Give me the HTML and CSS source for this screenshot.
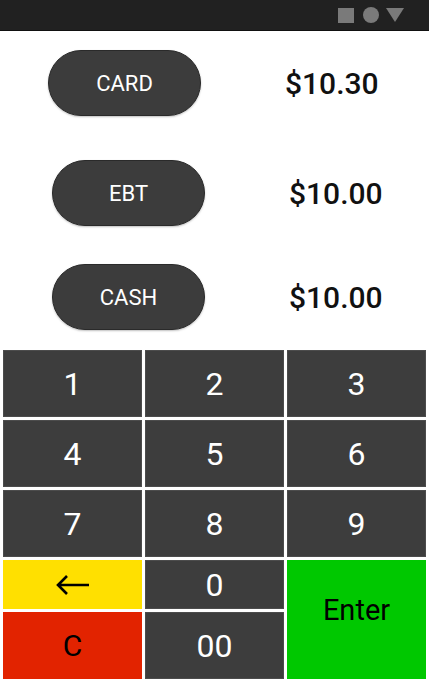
FILE: index.html
```html
<html>

<head>
    <meta charset="UTF-8" />
    <link rel="stylesheet" href="styles.css">
</head>

<body>
    <div class="statusbar">
        <span class="nav-square"></span>
        <span class="nav-circle"></span>
        <svg class="nav-tri" width="20" height="16" viewBox="0 0 20 16">
            <polygon points="1,1 19,1 10,15" fill="#7a7a7a" />
        </svg>
    </div>

    <div class="tenders">
        <div class="tender tender-first">
            <button class="pill">CARD</button>
            <span class="amount">$10.30</span>
        </div>
        <div class="tender tender-ebt">
            <button class="pill">EBT</button>
            <span class="amount">$10.00</span>
        </div>
        <div class="tender tender-cash">
            <button class="pill">CASH</button>
            <span class="amount">$10.00</span>
        </div>
    </div>

    <div class="keypad">
        <button class="key">1</button>
        <button class="key">2</button>
        <button class="key">3</button>
        <button class="key">4</button>
        <button class="key">5</button>
        <button class="key">6</button>
        <button class="key">7</button>
        <button class="key">8</button>
        <button class="key">9</button>
        <button class="key key-back">
            <svg width="36" height="22" viewBox="0 0 36 22">
                <path d="M34 11 H3 M12 2 L3 11 L12 20" fill="none" stroke="#000" stroke-width="2.6" />
            </svg>
        </button>
        <button class="key key-zero">0</button>
        <button class="key key-enter">Enter</button>
        <button class="key key-clear">C</button>
        <button class="key key-dzero">00</button>
    </div>
</body>

</html>
```

FILE: styles.css
```css
body {
    margin: 0;
    width: 429px;
    height: 681px;
    background: #fff;
    font-family: Roboto, 'Noto Sans', sans-serif;
    overflow: hidden;
}

.statusbar {
    height: 31px;
    background: #212121;
    border-bottom: 1px solid #111;
    display: flex;
    align-items: center;
    justify-content: flex-end;
    gap: 9px;
    padding-right: 24px;
    box-sizing: border-box;
}

.nav-square {
    width: 16px;
    height: 15px;
    background: #7a7a7a;
}

.nav-circle {
    width: 16px;
    height: 16px;
    border-radius: 50%;
    background: #7a7a7a;
}

.nav-tri {
    display: block;
    margin-left: -3px;
}

.tenders {
    display: flex;
    flex-direction: column;
    padding-top: 19px;
}

.tender {
    display: flex;
    align-items: center;
    gap: 84px;
    padding-left: 52px;
}

.tender-first {
    padding-left: 48px;
}

.tender-ebt {
    margin-top: 44px;
}

.tender-cash {
    margin-top: 38px;
}

.pill {
    width: 153px;
    height: 66px;
    border-radius: 33px;
    background: #3c3c3c;
    border: 1px solid #2a2a2a;
    box-shadow: 0 1px 2px rgba(0, 0, 0, 0.25);
    color: #fff;
    font-family: Roboto, sans-serif;
    font-size: 22px;
    padding: 0;
}

.amount {
    font-size: 30px;
    font-weight: 500;
    color: #111;
}

.keypad {
    display: grid;
    grid-template-columns: repeat(3, 139px);
    grid-template-rows: 67px 67px 67px 49px 67px;
    gap: 3px;
    padding: 0 3px;
    margin-top: 20px;
}

.key {
    background: #3d3d3d;
    border: 1px solid #4c4c4c;
    color: #fff;
    font-family: Roboto, sans-serif;
    font-size: 32px;
    padding: 0;
    display: flex;
    align-items: center;
    justify-content: center;
}

.key-back {
    background: #ffe000;
    border-color: #ffe000;
}

.key-clear {
    background: #e22300;
    border-color: #e22300;
    color: #000;
    font-size: 30px;
}

.key-enter {
    grid-column: 3;
    grid-row: 4 / 6;
    background: #00c800;
    border-color: #00c800;
    color: #000;
    font-size: 29px;
    padding-bottom: 20px;
}
```
